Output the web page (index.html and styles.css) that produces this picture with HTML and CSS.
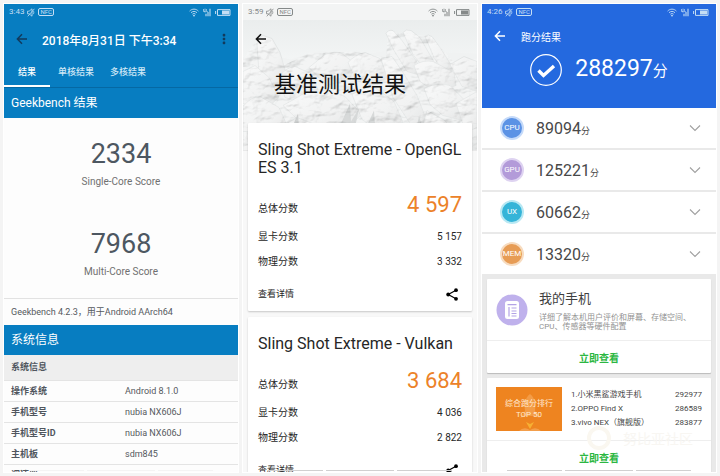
FILE: index.html
```html
<!DOCTYPE html>
<html lang="zh-CN">
<head>
<meta charset="utf-8">
<meta name="viewport" content="width=device-width, initial-scale=1">
<title>跑分结果</title>
<link rel="stylesheet" href="styles.css">
</head>
<body>
<svg class="defs" width="0" height="0" aria-hidden="true">
  <symbol id="mute" viewBox="0 0 8 9"><path d="M.5 3.2h1.6L5 .8v7.4L2.1 5.8H.5zM6.2 2.8c.8.9.8 2.4 0 3.4M.8 8.3 7.4.8" fill="none" stroke="currentColor" stroke-width=".8"/></symbol>
  <symbol id="signals" viewBox="0 0 42 9">
    <g fill="none" stroke="currentColor">
      <path d="M.6 3.1c2.5-2.6 6.300-2.600 8.800 0M2 4.700c1.800-1.700 4.200-1.700 6 0M3.400 6.200c1-.9 2.200-.9 3.200 0" stroke-width=".9"/>
      <path d="M14.500 1v2.500h2M16 .6v4M17.400 1v2.600h1.400" stroke-width=".7"/>
      <path d="M17 8.300V5.800M19 8.300V4M21 8.300V.8" stroke-width="1.100"/>
      <path d="M28.500 1.600h12.500v5.800H28.500zM26.600 3v3" stroke-width="1"/>
    </g>
    <circle cx="5" cy="7.600" r=".9" fill="currentColor"/>
    <rect x="33" y="2.500" width="7.200" height="4" fill="currentColor"/>
  </symbol>
  <symbol id="back" viewBox="0 0 12 12"><path d="M11 6H1.600M6 1.300 1.400 6 6 10.700" fill="none" stroke="currentColor" stroke-width="1.500"/></symbol>
  <symbol id="share" viewBox="0 0 12 13"><path d="M10 2.200 2.200 6.500 10 10.800" fill="none" stroke="currentColor" stroke-width="1.200"/><g fill="currentColor"><circle cx="10" cy="2.200" r="1.900"/><circle cx="2.200" cy="6.500" r="1.900"/><circle cx="10" cy="10.800" r="1.900"/></g></symbol>
  <symbol id="chevron" viewBox="0 0 12 8"><path d="M1 1.500l5 5 5-5" fill="none" stroke="currentColor" stroke-width="1.100"/></symbol>
</svg>

<main class="screens">
  <section class="screen geek">
    <div class="status"><span>3:43</span><svg class="mute"><use href="#mute"/></svg><span class="nfc">NFC</span><svg class="signals"><use href="#signals"/></svg></div>
    <header class="bar geek-bar">
      <button class="icon-btn dark" aria-label="返回"><svg class="back"><use href="#back"/></svg></button>
      <h1>2018年8月31日 下午3:34</h1>
      <button class="icon-btn dark more" aria-label="更多"><svg viewBox="0 0 4 12"><g fill="currentColor"><rect x=".7" y=".8" width="2.600" height="2.600" rx="1"/><rect x=".7" y="4.700" width="2.600" height="2.600" rx="1"/><rect x=".7" y="8.600" width="2.600" height="2.600" rx="1"/></g></svg></button>
    </header>
    <nav class="tabs">
      <button class="tab active">结果</button>
      <button class="tab">单核结果</button>
      <button class="tab">多核结果</button>
    </nav>
    <h2 class="band">Geekbench 结果</h2>
    <div class="scores">
      <div class="score"><strong>2334</strong><span>Single-Core Score</span></div>
      <div class="score"><strong>7968</strong><span>Multi-Core Score</span></div>
    </div>
    <p class="version">Geekbench 4.2.3，用于Android AArch64</p>
    <h2 class="band">系统信息</h2>
    <table class="info">
      <thead><tr><th colspan="2">系统信息</th></tr></thead>
      <tbody>
        <tr><th>操作系统</th><td>Android 8.1.0</td></tr>
        <tr><th>手机型号</th><td>nubia NX606J</td></tr>
        <tr><th>手机型号ID</th><td>nubia NX606J</td></tr>
        <tr><th>主机板</th><td>sdm845</td></tr>
        <tr><th>调速器</th><td></td></tr>
      </tbody>
    </table>
    <div class="handles"><i></i><i></i><i></i></div>
  </section>

  <section class="screen mark">
    <div class="status"><span>3:59</span><svg class="mute"><use href="#mute"/></svg><span class="nfc">NFC</span><svg class="signals"><use href="#signals"/></svg></div>
    <div class="hero">
      <svg class="rocks" viewBox="0 0 234 131" preserveAspectRatio="xMidYMid slice" aria-hidden="true">
        <defs>
          <linearGradient id="sky" x1="0" y1="0" x2="0" y2="1"><stop offset="0" stop-color="#eaeded"/><stop offset=".35" stop-color="#f4f6f6"/><stop offset="1" stop-color="#eaecec"/></linearGradient>
          <linearGradient id="stone" x1="0" y1="0" x2="1" y2="1"><stop offset="0" stop-color="#f7f8f8"/><stop offset=".6" stop-color="#eeefef"/><stop offset="1" stop-color="#dcdede"/></linearGradient>
          <filter id="rough" x="0" y="0" width="100%" height="100%">
            <feTurbulence type="fractalNoise" baseFrequency=".06 .09" numOctaves="4" seed="8" result="n"/>
            <feDiffuseLighting in="n" surfaceScale="6" diffuseConstant="1.200" lighting-color="#fff"><feDistantLight azimuth="235" elevation="55"/></feDiffuseLighting>
            <feComposite in2="SourceAlpha" operator="in"/>
          </filter>
        </defs>
        <rect width="234" height="131" fill="url(#sky)"/>
        <path d="M0 38 14 32 30 36 48 40 66 34 80 31 96 36 112 31 128 34 144 31 234 34V131H0z" fill="#f0f2f2"/>
        <g fill="url(#stone)" stroke="#d9dcdc" stroke-width=".6" stroke-linejoin="round">
          <path d="M14 24Q16 17 20 16L29 19 37 33 42 50 38 66 24 70 16 54z"/>
          <path d="M143 14Q145 10 150 11L159 21 173 41 181 57 164 52 151 31z"/>
          <path d="M160 13Q163 9 168 11L177 18 189 39 199 55 184 53 170 35z"/>
          <path d="M182 17Q185 14 189 17L197 28 211 50 204 58 191 38z"/>
          <path d="M0 52 12 46 26 58 36 78 22 90 0 84z"/>
          <path d="M36 58Q42 48 52 47L68 54 75 70 61 84 42 78z"/>
          <path d="M66 48 82 35Q92 31 99 34L113 45 106 60 84 66z"/>
          <path d="M105 43Q112 35 122 33L137 39 145 57 130 66 113 61z"/>
          <path d="M138 39 149 37 160 53 174 76 188 112 171 110 150 78z"/>
          <path d="M171 46Q180 40 190 42L211 53 213 66 193 73 177 62z"/>
          <path d="M207 45 221 37 234 42V72L219 67z"/>
          <path d="M181 69Q194 62 207 66L224 83 219 101 200 96 187 85z"/>
          <path d="M40 86 68 70Q86 70 102 77L119 95 101 111 63 108z"/>
          <path d="M109 75Q120 67 132 68L151 82 160 103 138 113 119 100z"/>
          <path d="M0 87Q8 77 17 77L36 88 45 108 24 118 0 112z"/>
          <path d="M184 91 202 101 214 118 192 124 179 108z"/>
          <path d="M213 84 234 72V119L222 111z"/>
          <path d="M30 112 54 98 80 108 102 102 120 118 140 106 164 117 181 105 202 123 234 108V131H0V112z"/>
        </g>
        <path d="M98 104 107 84 108 102 116 89 112 108M125 104 131 91 132 107M49 108 55 94 56 108M173 109 176 97 180 109" fill="#cdd0d0"/>
        <path d="M0 40 14 20 28 20 42 45 66 34 110 32 143 38 145 12 188 17 212 44 234 39V131H0z" filter="url(#rough)" opacity=".2"/>
      </svg>
      <div class="hero-text">
        <header class="bar"><button class="icon-btn" aria-label="返回"><svg class="back"><use href="#back"/></svg></button></header>
        <h1>基准测试结果</h1>
      </div>
    </div>
    <div class="cards">
      <article class="card">
        <h2>Sling Shot Extreme - OpenGL ES 3.1</h2>
        <dl>
          <div class="total"><dt>总体分数</dt><dd>4 597</dd></div>
          <div><dt>显卡分数</dt><dd>5 157</dd></div>
          <div><dt>物理分数</dt><dd>3 332</dd></div>
        </dl>
        <footer><a href="#detail">查看详情</a><button class="icon-btn share" aria-label="分享"><svg><use href="#share"/></svg></button></footer>
      </article>
      <article class="card">
        <h2>Sling Shot Extreme - Vulkan</h2>
        <dl>
          <div class="total"><dt>总体分数</dt><dd>3 684</dd></div>
          <div><dt>显卡分数</dt><dd>4 036</dd></div>
          <div><dt>物理分数</dt><dd>2 822</dd></div>
        </dl>
        <footer><a href="#detail">查看详情</a><button class="icon-btn share" aria-label="分享"><svg><use href="#share"/></svg></button></footer>
      </article>
    </div>
    <div class="handles"><i></i><i></i><i></i></div>
  </section>

  <section class="screen antutu">
    <div class="top">
      <div class="status"><span>4:26</span><svg class="mute"><use href="#mute"/></svg><span class="nfc">NFC</span><svg class="signals"><use href="#signals"/></svg></div>
      <header class="bar"><button class="icon-btn" aria-label="返回"><svg class="back"><use href="#back"/></svg></button><h1>跑分结果</h1></header>
      <div class="result">
        <svg viewBox="0 0 32 32" aria-hidden="true"><circle cx="16" cy="16" r="15.300" fill="none" stroke="#fff" stroke-width="1.200"/><path d="M8.500 16.500l5 5L24 12" fill="none" stroke="#fff" stroke-width="3.400"/></svg>
        <p>288297<small>分</small></p>
      </div>
    </div>
    <ul class="parts">
      <li><span class="disc cpu">CPU</span><p>89094<small>分</small></p><button class="icon-btn" aria-label="展开 CPU"><svg><use href="#chevron"/></svg></button></li>
      <li><span class="disc gpu">GPU</span><p>125221<small>分</small></p><button class="icon-btn" aria-label="展开 GPU"><svg><use href="#chevron"/></svg></button></li>
      <li><span class="disc ux">UX</span><p>60662<small>分</small></p><button class="icon-btn" aria-label="展开 UX"><svg><use href="#chevron"/></svg></button></li>
      <li><span class="disc mem">MEM</span><p>13320<small>分</small></p><button class="icon-btn" aria-label="展开 MEM"><svg><use href="#chevron"/></svg></button></li>
    </ul>
    <div class="tiles">
      <article class="tile">
        <div class="phone">
          <svg viewBox="0 0 32 32" aria-hidden="true"><circle cx="16" cy="16" r="15.500" fill="#bfb1ec"/><rect x="9" y="7" width="14" height="18" rx="2.500" fill="#fff"/><path d="M11.500 10.600h9M13 13v9.500M15.500 14h5M15.500 17h5M15.500 19.500h5M15.500 22h5" stroke="#b3a3e6" stroke-width="1.200"/></svg>
          <div><h2>我的手机</h2><p>详细了解本机用户评价和屏幕、存储空间、CPU、传感器等硬件配置</p></div>
        </div>
        <button class="look">立即查看</button>
      </article>
      <article class="tile">
        <div class="rank">
          <div class="poster">
            <svg viewBox="0 0 66 44" aria-hidden="true"><path d="M34 7c5 4 6 10 5 17l5 7-6-2h-8l-6 2 5-7c-1-7 0-13 5-17z" fill="#f6a95a" opacity=".65"/><path d="M34 42l-4-7 4 2 4-2z" fill="#f9c33c" opacity=".7"/><path d="M23 44q5-5 11-1 6-4 11 1z" fill="#f7b06a" opacity=".6"/></svg>
            <span>综合跑分排行<br>TOP 50</span>
          </div>
          <table>
            <tr><td>1.小米黑鲨游戏手机</td><td>292977</td></tr>
            <tr><td>2.OPPO Find X</td><td>286589</td></tr>
            <tr><td>3.vivo NEX（旗舰版）</td><td>283877</td></tr>
          </table>
        </div>
        <button class="look">立即查看</button>
        <div class="stamp" aria-hidden="true"><i></i>努比亚社区</div>
      </article>
    </div>
    <div class="handles"><i></i><i></i><i></i></div>
  </section>
</main>
</body>
</html>
```
FILE: styles.css
```css
* { box-sizing: border-box; margin: 0; padding: 0; }

body {
  background: #f4f4f4;
  color: #333;
  font-family: Roboto, "Noto Sans CJK SC", sans-serif;
  font-size: 10px;
}

button { border: 0; background: none; color: inherit; font: inherit; cursor: pointer; }
a { color: inherit; text-decoration: none; }
h1, h2 { font-weight: 400; }
.defs { position: absolute; }

.screens {
  display: grid;
  grid-template-columns: repeat(3, minmax(0, 1fr));
  gap: 5px;
  height: 100vh;
  padding: 4px;
}

.screen {
  position: relative;
  overflow: hidden;
  background: #fdfdfd;
  outline: 1px solid #fff;
}

/* status bar */
.status { display: flex; align-items: center; gap: 3px; height: 16px; padding: 0 7px 0 5px; font-size: 8px; line-height: 16px; }
.mute { width: 8px; height: 9px; }
.nfc { padding: 0 1px; border: 1px solid; border-radius: 2px; font-size: 6px; line-height: 6px; }
.signals { width: 42px; height: 9px; margin-left: auto; }
.geek .status, .antutu .status { color: #c4def4; }

/* app bars */
.bar { display: flex; align-items: center; height: 38px; padding: 0 12px; }
.icon-btn { display: grid; place-items: center; }
.back { width: 12px; height: 12px; }

/* left screen */
.geek .status, .geek-bar, .tabs, .band { background: #077dc1; }
.geek-bar { color: #fff; }
.geek-bar h1 { flex: 1; padding-left: 14px; font-size: 12px; font-weight: 500; }
.dark { color: #123a5c; }
.more svg { width: 4px; height: 12px; }
.tabs { position: relative; display: flex; height: 30px; border-bottom: 1px solid #0568a3; color: #cfe7f6; }
.tab { padding: 0 8px; font-size: 9px; font-weight: 500; border-bottom: 2px solid transparent; }
.tab.active { width: 46px; color: #fff; border-bottom-color: #fff; }
.band { height: 30px; padding-left: 7px; color: #fff; font-size: 12px; line-height: 30px; }
.scores { display: grid; gap: 34px; padding: 18px 0 16px; border-bottom: 1px solid #e2e2e2; }
.score { display: grid; justify-items: center; color: #4d5761; }
.score strong { font-size: 27px; font-weight: 400; line-height: 36px; }
.score span { color: #707070; font-size: 10px; line-height: 20px; }
.version { padding-left: 7px; color: #55595e; font-size: 9px; line-height: 26px; }
.info { width: 100%; border-collapse: collapse; table-layout: fixed; color: #55595e; font-size: 9px; line-height: 18px; text-align: left; }
.info th, .info td { height: 21px; padding: 0 0 0 7px; border-bottom: 1px solid #e4e4e4; }
.info th { font-weight: 700; color: #50565e; }
.info td { padding-left: 4px; }
.info thead th { height: 25px; background: #eee; }

/* middle screen */
.mark { background: #f8f8f8; }
.mark .status { background: #f3f4f4; color: #858989; }
.hero { position: relative; height: 131px; border-bottom: 1px solid #e8e8e8; }
.rocks { position: absolute; inset: 0; width: 100%; height: 100%; }
.hero-text { position: relative; color: #111; }
.hero h1 { padding-left: 31px; font-size: 22px; line-height: 54px; }
.cards { position: relative; display: grid; gap: 6px; margin-top: -28px; padding: 0 5px; }
.card { padding: 18px 10px 5px; border-radius: 1px; background: #fff; box-shadow: 0 1px 2px #0003; color: #262626; }
.card h2 { font-size: 16px; line-height: 18px; }
.card dl { margin-top: 12px; }
.card dl div { display: flex; align-items: baseline; justify-content: space-between; line-height: 25px; }
.card dl .total { height: 35px; line-height: 32px; }
.total dd { color: #ec8229; font-size: 22px; }
.card footer { display: flex; align-items: center; justify-content: space-between; margin-top: 8px; font-size: 9px; line-height: 24px; }
.share { padding-right: 4px; color: #000; }
.share svg { width: 12px; height: 13px; }

/* right screen */
.antutu { background: #e9e9e9; }
.top { padding-bottom: 20px; background: #2469df; color: #fff; }
.antutu .bar { height: 32px; }
.antutu .bar h1 { padding-left: 15px; font-size: 10px; }
.result { display: flex; align-items: center; justify-content: center; gap: 13px; height: 36px; }
.result svg { width: 32px; height: 32px; }
.result p { font-size: 23px; line-height: 32px; }
.result small { font-size: 15px; }
.parts { display: grid; gap: 2px; list-style: none; }
.parts li { display: flex; align-items: center; height: 40px; padding: 0 15px 0 18px; background: #fff; }
.parts p { flex: 1; padding-left: 12px; color: #484848; font-size: 16px; }
.parts small { font-size: 9px; }
.parts button { color: #a0a0a0; }
.parts button svg { width: 12px; height: 8px; }
.disc { width: 24px; border: 2px solid; border-radius: 50%; color: #fff; font-size: 8px; line-height: 20px; text-align: center; }
.cpu { border-color: #c5daf9; background: #5b92e5; }
.gpu { border-color: #ded3f1; background: #b39bd9; }
.ux { border-color: #b8e8f3; background: #35b4d8; }
.mem { border-color: #f7dcc0; background: #e79c55; }
.tiles { display: grid; gap: 5px; padding: 5px; }
.tile { position: relative; border-radius: 1px; background: #fff; box-shadow: 0 1px 1px #0003; }
.phone { display: flex; align-items: center; gap: 11px; height: 61px; padding: 0 10px 0 9px; }
.phone svg { flex: none; width: 32px; height: 32px; }
.phone h2 { color: #3f3f3f; font-size: 13px; line-height: 20px; }
.phone p { margin-top: 4px; color: #929292; font-size: 8px; line-height: 9px; }
.look { display: block; width: 100%; height: 33px; border-top: 1px solid #eee; color: #2cb742; font-weight: 700; }
.rank { display: flex; align-items: center; gap: 9px; height: 62px; padding: 0 9px; }
.poster { display: grid; width: 66px; height: 44px; background: #ee8420; color: #ffe9cf; font-size: 8px; line-height: 11px; text-align: center; }
.poster > * { grid-area: 1 / 1; }
.poster span { align-self: center; }
.rank table { flex: 1; border-collapse: collapse; color: #444; font-size: 8px; line-height: 14px; }
.rank td:last-child { text-align: right; }
.stamp { position: absolute; right: 18px; top: 48px; display: flex; align-items: center; gap: 12px; color: #f8f6f2; font-size: 14px; pointer-events: none; }
.stamp i { width: 24px; height: 24px; border: 4px solid #faf7f0; border-radius: 50%; }

/* gesture handles */
.handles { position: absolute; right: 25px; bottom: 1px; left: 25px; display: grid; grid-template-columns: 4fr 5fr 4fr; gap: 3px; }
.handles i { height: 1px; background: #d0d0d0; }
.geek .handles i { background: #f4f4f4; }
```
